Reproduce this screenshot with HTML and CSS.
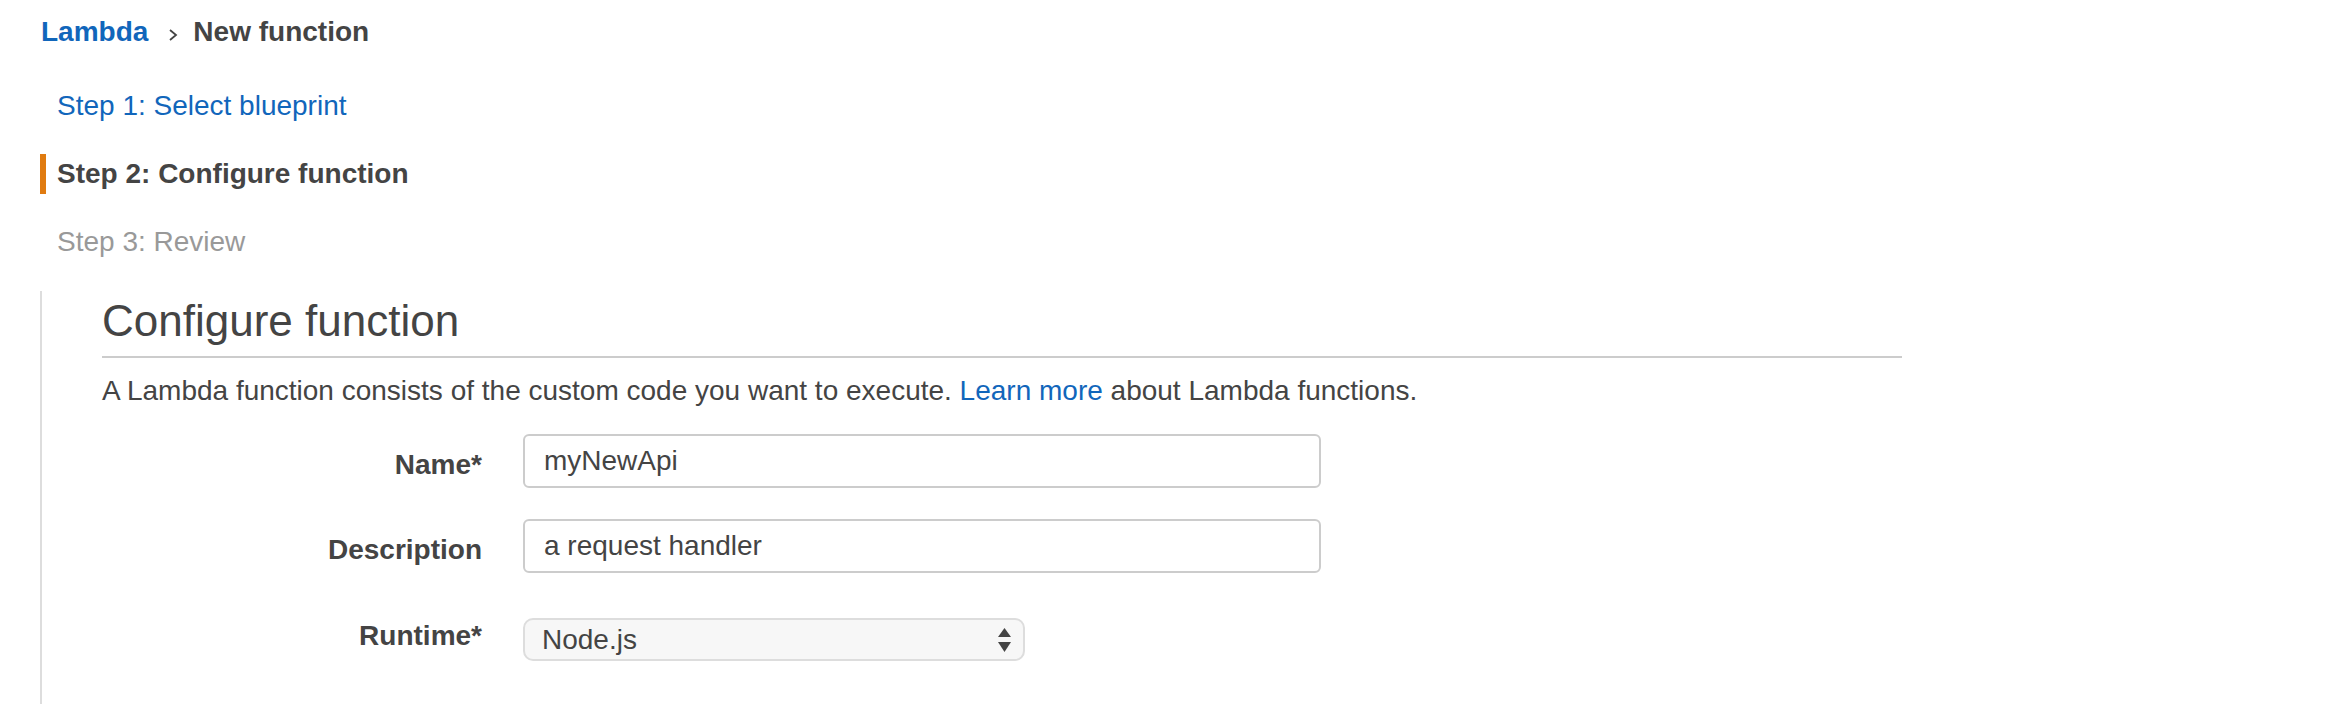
FILE: index.html
```html
<!DOCTYPE html>
<html lang="en">
<head>
<meta charset="utf-8">
<title>Lambda - New function</title>
<link rel="stylesheet" href="styles.css">
</head>
<body>
<nav class="breadcrumb">
  <a class="crumb-link" href="#">Lambda</a>
  <svg class="crumb-sep" width="10" height="12" viewBox="0 0 10 12"><polyline points="2,1 8,6 2,11" fill="none" stroke="#444" stroke-width="1.8"/></svg>
  <span class="crumb-current">New function</span>
</nav>
<ul class="steps">
  <li class="step step-done"><a href="#">Step 1: Select blueprint</a></li>
  <li class="step step-active">Step 2: Configure function</li>
  <li class="step step-todo">Step 3: Review</li>
</ul>
<main class="content">
  <h2 class="title">Configure function</h2>
  <p class="intro">A Lambda function consists of the custom code you want to execute. <a href="#">Learn more</a> about Lambda functions.</p>
  <form class="form">
    <label class="label" for="fn-name">Name*</label>
    <input class="text-input" id="fn-name" type="text" value="myNewApi">
    <label class="label" for="fn-desc">Description</label>
    <input class="text-input" id="fn-desc" type="text" value="a request handler">
    <label class="label">Runtime*</label>
    <div class="select">
      <span>Node.js</span>
      <svg class="select-arrows" width="13" height="24" viewBox="0 0 13 24"><polygon points="6.5,0 13,9 0,9" fill="#444"/><polygon points="0,14 13,14 6.5,24" fill="#444"/></svg>
    </div>
  </form>
</main>
</body>
</html>
```
FILE: styles.css
```css
html, body {
  margin: 0;
  padding: 0;
  background: #ffffff;
}
body {
  font-family: "Liberation Sans", Arial, sans-serif;
  font-size: 28px;
  color: #444444;
  min-height: 704px;
  display: flex;
  flex-direction: column;
}
a {
  color: #1166bb;
  text-decoration: none;
}
.breadcrumb {
  display: flex;
  align-items: center;
  padding: 12px 0 0 41px;
  line-height: 40px;
  font-weight: bold;
}
.crumb-sep {
  margin: 6px 15px 0 20px;
}
.crumb-current {
  color: #444444;
}
.steps {
  list-style: none;
  margin: 34px 0 0 40px;
  padding: 0;
  display: flex;
  flex-direction: column;
  gap: 28px;
}
.step {
  line-height: 40px;
  height: 40px;
  padding-left: 11px;
  border-left: 6px solid transparent;
}
.step-active {
  border-left-color: #e07b10;
  font-weight: bold;
  color: #444444;
}
.step-todo {
  color: #999999;
}
.content {
  flex: 1;
  margin: 29px 0 0 40px;
  border-left: 2px solid #dddddd;
  padding: 3px 0 0 60px;
}
.title {
  margin: 0;
  width: 1800px;
  font-size: 44px;
  font-weight: normal;
  line-height: 54px;
  padding-bottom: 8px;
  border-bottom: 2px solid #cccccc;
  color: #444444;
}
.intro {
  margin: 13px 0 0 0;
  line-height: 40px;
}
.form {
  margin-top: 23px;
  display: grid;
  grid-template-columns: 380px auto;
  column-gap: 41px;
  row-gap: 31px;
  align-items: center;
  justify-items: start;
}
.label {
  justify-self: end;
  font-weight: bold;
  line-height: 40px;
  padding-top: 7px;
}
.text-input {
  box-sizing: border-box;
  width: 798px;
  height: 54px;
  border: 2px solid #cccccc;
  border-radius: 6px;
  padding: 0 19px;
  font-family: "Liberation Sans", Arial, sans-serif;
  font-size: 28px;
  color: #444444;
  background: #ffffff;
  outline: none;
}
.select {
  box-sizing: border-box;
  width: 502px;
  height: 43px;
  margin-top: 14px;
  border: 2px solid #dddddd;
  border-radius: 10px;
  background: #f7f7f7;
  padding: 0 12px 0 17px;
  display: flex;
  align-items: center;
  justify-content: space-between;
  line-height: 39px;
}
.select-arrows {
  display: block;
}
```
